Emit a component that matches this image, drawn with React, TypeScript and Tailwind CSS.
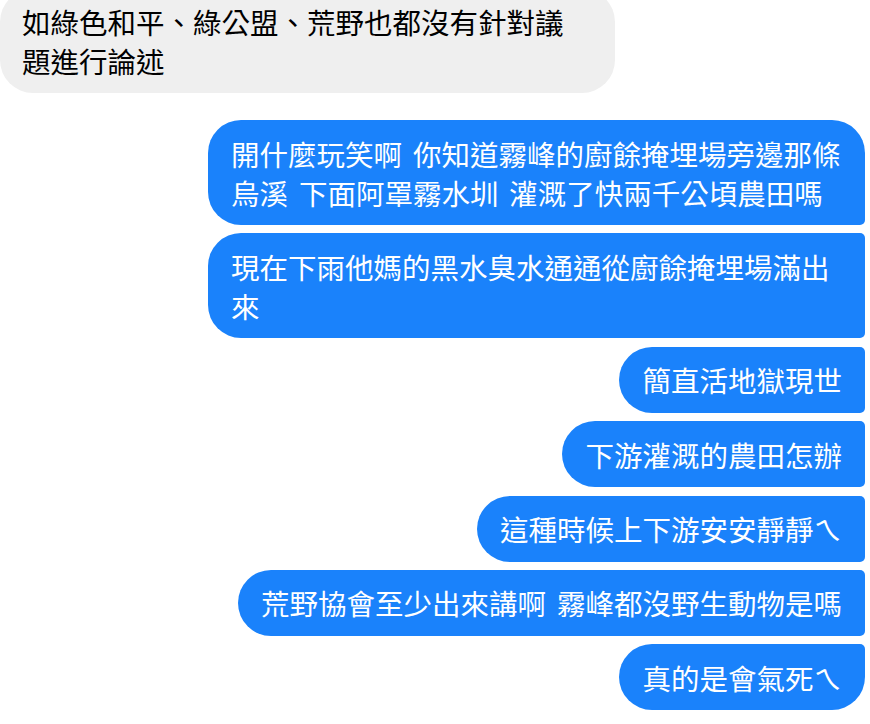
import React from 'react';

type Msg = { text: string; pos: 'first' | 'middle' | 'last' };

const sent: Msg[] = [
  { text: '開什麼玩笑啊 你知道霧峰的廚餘掩埋場旁邊那條烏溪 下面阿罩霧水圳 灌溉了快兩千公頃農田嗎', pos: 'first' },
  { text: '現在下雨他媽的黑水臭水通通從廚餘掩埋場滿出來', pos: 'middle' },
  { text: '簡直活地獄現世', pos: 'middle' },
  { text: '下游灌溉的農田怎辦', pos: 'middle' },
  { text: '這種時候上下游安安靜靜ㄟ', pos: 'middle' },
  { text: '荒野協會至少出來講啊 霧峰都沒野生動物是嗎', pos: 'middle' },
  { text: '真的是會氣死ㄟ', pos: 'last' },
];

const cornerClass = {
  first: 'rounded-l-[33px] rounded-tr-[33px] rounded-br-[5px]',
  middle: 'rounded-l-[33px] rounded-r-[5px]',
  last: 'rounded-l-[33px] rounded-tr-[5px] rounded-br-[33px]',
};

const App = () => {
  return (
    <div
      className="w-[870px] h-[724px] overflow-hidden bg-white text-[28.5px] leading-[39px] [word-spacing:4.5px]"
      style={{ fontFamily: '"Noto Sans CJK TC", "Noto Sans CJK SC", sans-serif' }}
    >
      <div className="-mt-[11px] w-[615px] rounded-[33px] bg-[#efefef] pl-[22px] pr-[30px] py-[13px] text-black">
        如綠色和平、綠公盟、荒野也都沒有針對議題進行論述
      </div>
      <div className="mt-[27px] flex flex-col items-end gap-[8.4px] pr-[5px]">
        {sent.map((m, i) => (
          <div
            key={i}
            className={`max-w-[657px] bg-[#1a82fb] px-[23px] py-[13.5px] text-white ${cornerClass[m.pos]}`}
          >
            {m.text}
          </div>
        ))}
      </div>
    </div>
  );
};

export default App;
